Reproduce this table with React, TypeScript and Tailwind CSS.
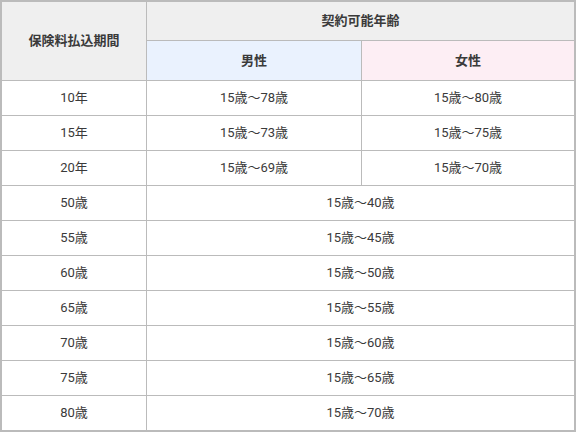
const rows: { term: string; male: string; female?: string }[] = [
  { term: "10年", male: "15歳〜78歳", female: "15歳〜80歳" },
  { term: "15年", male: "15歳〜73歳", female: "15歳〜75歳" },
  { term: "20年", male: "15歳〜69歳", female: "15歳〜70歳" },
  { term: "50歳", male: "15歳〜40歳" },
  { term: "55歳", male: "15歳〜45歳" },
  { term: "60歳", male: "15歳〜50歳" },
  { term: "65歳", male: "15歳〜55歳" },
  { term: "70歳", male: "15歳〜60歳" },
  { term: "75歳", male: "15歳〜65歳" },
  { term: "80歳", male: "15歳〜70歳" },
];

export default function App() {
  return (
    <div
      className="w-[576px] h-[432px] bg-white border-2 border-[#bbbbbb] text-[13px] text-[#3a3a3a]"
      style={{ fontFamily: 'Roboto, "Noto Sans CJK JP", sans-serif' }}
    >
      <div className="grid grid-cols-[145px_215px_1fr] grid-rows-[39px_40px_repeat(9,35px)_34px]">
        <div className="row-span-2 flex items-center justify-center bg-[#efefef] border-r border-b border-[#bbbbbb] font-semibold">
          保険料払込期間
        </div>
        <div className="col-span-2 flex items-center justify-center bg-[#efefef] border-b border-[#bbbbbb] font-semibold">
          契約可能年齢
        </div>
        <div className="flex items-center justify-center bg-[#eaf2fe] border-r border-b border-[#bbbbbb] font-semibold">
          男性
        </div>
        <div className="flex items-center justify-center bg-[#fdeef4] border-b border-[#bbbbbb] font-semibold">
          女性
        </div>

        {rows.map((r, i) => {
          const last = i === rows.length - 1;
          const bb = last ? "" : "border-b";
          return (
            <div key={r.term} className="contents">
              <div className={`flex items-center justify-center border-r border-[#bbbbbb] ${bb}`}>
                {r.term}
              </div>
              {r.female ? (
                <>
                  <div className={`flex items-center justify-center border-r border-[#bbbbbb] ${bb}`}>
                    {r.male}
                  </div>
                  <div className={`flex items-center justify-center border-[#bbbbbb] ${bb}`}>
                    {r.female}
                  </div>
                </>
              ) : (
                <div className={`col-span-2 flex items-center justify-center border-[#bbbbbb] ${bb}`}>
                  {r.male}
                </div>
              )}
            </div>
          );
        })}
      </div>
    </div>
  );
}
